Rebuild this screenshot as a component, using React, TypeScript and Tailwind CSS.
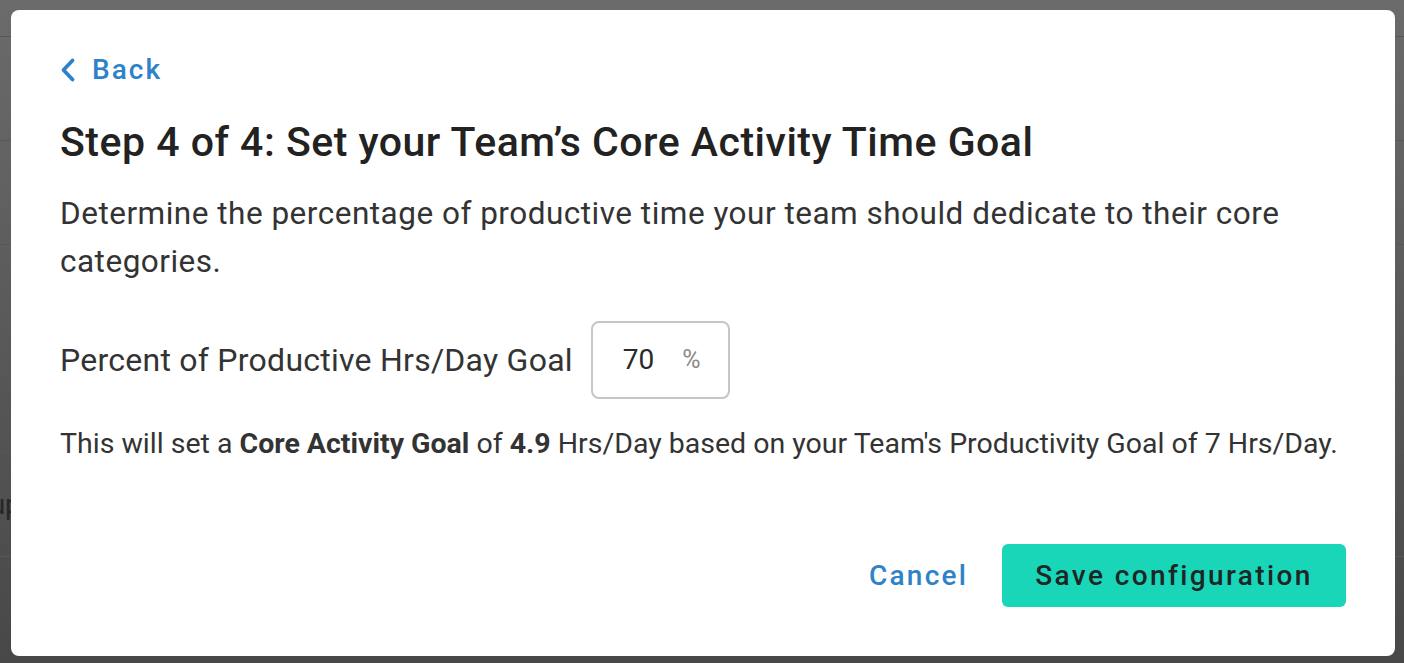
import React from "react"

const ROWS = [0, 1, 2, 3, 4, 5]

export default function App() {
  return (
    <div className="relative h-[663px] w-[1404px] overflow-hidden bg-gradient-to-b from-[#6b6b6b] to-[#484848] font-['Roboto',sans-serif]">
      {/* page behind the overlay */}
      <div className="flex flex-col pt-[36px]">
        {ROWS.map((r) => (
          <div key={r} className="flex h-[104px] items-center border-t border-[#575757]">
            {r === 4 && <span className="ml-[-51px] text-[28px] text-[#262626]">Setup</span>}
          </div>
        ))}
      </div>

      {/* modal */}
      <div className="absolute left-[11px] top-[10px] flex h-[646px] w-[1384px] flex-col rounded-[8px] bg-white px-[49px]">
        <button className="mt-[45px] flex items-center gap-[16px] self-start text-[#2e82c8]">
          <svg width="16" height="26" viewBox="0 0 16 26" fill="none">
            <path d="M12.5 3.5 L3.5 13 L12.5 22.5" stroke="currentColor" strokeWidth="3.8" strokeLinecap="round" strokeLinejoin="round" />
          </svg>
          <span className="text-[28px] font-medium leading-[30px] tracking-[2px]">Back</span>
        </button>

        <h2 className="mt-[33px] text-[41px] font-medium leading-[48px] tracking-[0.5px] text-[#222]">
          Step 4 of 4: Set your Team’s Core Activity Time Goal
        </h2>

        <p className="mt-[24px] text-[31.5px] leading-[48px] tracking-[0.5px] text-[#333]">
          Determine the percentage of productive time your team should dedicate to their core categories.
        </p>

        <div className="mt-[35px] flex items-center gap-[18px]">
          <span className="text-[32px] leading-[40px] tracking-[0.25px] text-[#333]">Percent of Productive Hrs/Day Goal</span>
          <div className="flex h-[78px] w-[139px] items-center rounded-[8px] border-2 border-[#c6c6c6] pl-[30px]">
            <span className="text-[28px] text-[#2a2a2a]">70</span>
            <span className="ml-[28px] text-[25px] text-[#8a8a8a]">%</span>
          </div>
        </div>

        <p className="mt-[28px] text-[28.5px] leading-[34px] text-[#333]">
          This will set a <b className="font-bold">Core Activity Goal</b> of <b className="font-bold">4.9</b> Hrs/Day based on your Team's Productivity Goal of 7 Hrs/Day.
        </p>

        <div className="mt-[83px] flex items-center justify-end gap-[34px]">
          <button className="text-[28px] font-medium tracking-[2.2px] text-[#2e82c8]">Cancel</button>
          <button className="h-[63px] w-[344px] rounded-[6px] bg-[#1ad6b9] text-[28px] font-medium tracking-[2.4px] text-[#1e2626]">
            Save configuration
          </button>
        </div>
      </div>
    </div>
  )
}
